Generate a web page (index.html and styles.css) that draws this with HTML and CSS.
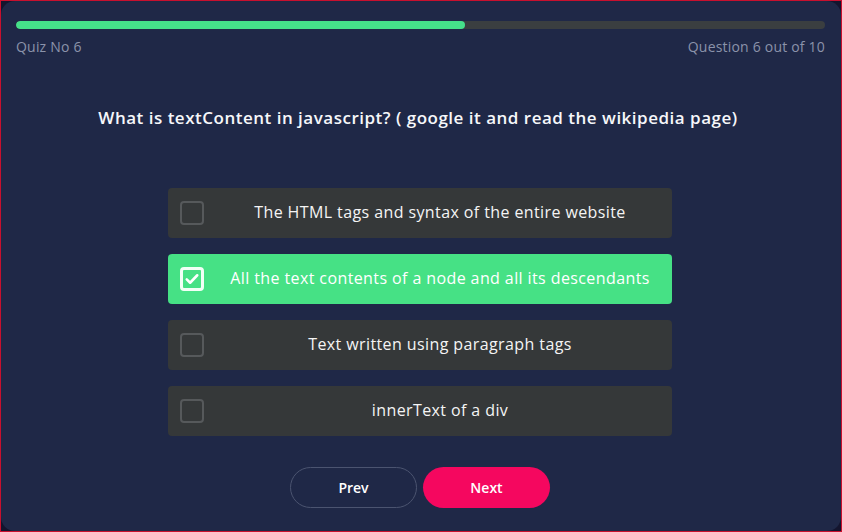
FILE: index.html
```html
<!DOCTYPE html>
<html>
<head>
<meta charset="utf-8">
<link rel="stylesheet" href="styles.css">
</head>
<body>
<div class="frame">
  <main class="card">
    <div class="progress"><div class="progress-fill" style="width: 55.5%"></div></div>
    <div class="meta">
      <span>Quiz No 6</span>
      <span>Question 6 out of 10</span>
    </div>
    <h1 class="question">What is textContent in javascript? ( google it and read the wikipedia page)</h1>
    <ul class="options">
      <li class="option"><span class="box"></span><span class="label">The HTML tags and syntax of the entire website</span></li>
      <li class="option selected"><span class="box"><svg viewBox="0 0 24 24" width="18" height="18"><path d="M5 12.5l4.5 4.5L19 7" fill="none" stroke="#fff" stroke-width="3.4" stroke-linecap="round" stroke-linejoin="round"/></svg></span><span class="label">All the text contents of a node and all its descendants</span></li>
      <li class="option"><span class="box"></span><span class="label">Text written using paragraph tags</span></li>
      <li class="option"><span class="box"></span><span class="label">innerText of a div</span></li>
    </ul>
    <div class="nav">
      <button class="btn prev">Prev</button>
      <button class="btn next">Next</button>
    </div>
  </main>
</div>
</body>
</html>
```
FILE: styles.css
```css
* { box-sizing: border-box; }
html, body { margin: 0; height: 100%; }
body {
  background: #14152e;
  font-family: "Open Sans", "Noto Sans", sans-serif;
}
.frame {
  height: 532px;
  border: 1px solid #c8102e;
  display: flex;
}
.card {
  flex: 1;
  background: #1f2847;
  border-radius: 14px;
  padding: 20px 16px 0 15px;
  display: flex;
  flex-direction: column;
}
.progress {
  height: 8px;
  background: #3a3e40;
  border-radius: 4px;
  overflow: hidden;
}
.progress-fill {
  height: 100%;
  background: #45e08a;
  border-radius: 4px;
}
.meta {
  display: flex;
  justify-content: space-between;
  margin-top: 9px;
  font-size: 14px;
  color: #8b93aa;
  line-height: 18px;
  letter-spacing: 0.2px;
}
.question {
  margin: 50px 0 0;
  padding-right: 5px;
  text-align: center;
  font-size: 17px;
  font-weight: 600;
  color: #f6f7fa;
  line-height: 24px;
  letter-spacing: 0.5px;
}
.options {
  list-style: none;
  margin: 58px 0 0;
  padding: 0 1px 0 0;
  display: flex;
  flex-direction: column;
  align-items: center;
  gap: 16px;
}
.option {
  width: 504px;
  height: 50px;
  background: #353839;
  border-radius: 4px;
  display: flex;
  align-items: center;
  padding: 0 12px;
  color: #f4f4f4;
  font-size: 16px;
  font-weight: 500;
  letter-spacing: 0.4px;
}
.option.selected {
  background: #46e185;
  color: #fff;
}
.box {
  width: 24px;
  height: 24px;
  border: 2px solid #56595b;
  border-radius: 4px;
  display: flex;
  align-items: center;
  justify-content: center;
  flex: none;
}
.selected .box { border: 3px solid #f2fff6; }
.label {
  flex: 1;
  padding: 0 0 3px 16px;
  text-align: center;
}
.nav {
  margin-top: 31px;
  padding-right: 1px;
  display: flex;
  justify-content: center;
  gap: 6px;
}
.btn {
  width: 127px;
  height: 41px;
  border-radius: 21px;
  padding-bottom: 2px;
  font-family: inherit;
  font-size: 14px;
  font-weight: 600;
  color: #fff;
  cursor: pointer;
}
.prev {
  background: transparent;
  border: 1px solid #4b5470;
}
.next {
  background: #f5075f;
  border: none;
}
```
